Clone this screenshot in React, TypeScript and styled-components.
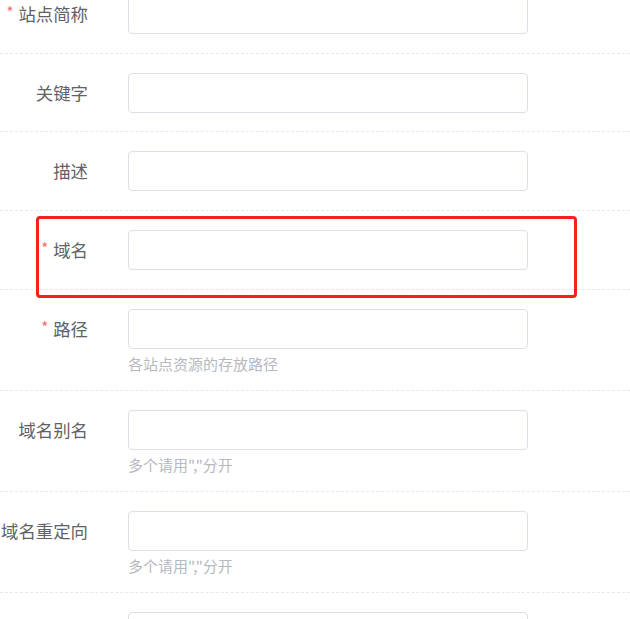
import React from "react";
import styled, { createGlobalStyle } from "styled-components";

type Field = {
  label: string;
  required?: boolean;
  hint?: string;
  marked?: boolean;
};

const fields: Field[] = [
  { label: "站点简称", required: true },
  { label: "关键字" },
  { label: "描述" },
  { label: "域名", required: true, marked: true },
  { label: "路径", required: true, hint: "各站点资源的存放路径" },
  { label: "域名别名", hint: '多个请用","分开' },
  { label: "域名重定向", hint: '多个请用","分开' },
  { label: "" },
];

const App = () => {
  return (
    <>
      <GlobalStyle />
      <Form>
        {fields.map((f, i) => (
          <Row key={i} hasHint={!!f.hint}>
            <Label>
              {f.required && <Star>*</Star>}
              {f.label}
            </Label>
            <Control>
              <Input type="text" />
              {f.hint && <Hint>{f.hint}</Hint>}
            </Control>
            {f.marked && <Highlight />}
          </Row>
        ))}
      </Form>
    </>
  );
};

export default App;

const GlobalStyle = createGlobalStyle`
  html, body {
    margin: 0;
    padding: 0;
    background: #fff;
    overflow: hidden;
  }
  body {
    font-family: "Noto Sans CJK SC", "Noto Sans", sans-serif;
  }
`;

const Form = styled.div`
  margin-top: -25px;
  width: 630px;
`;

const Row = styled.div<{ hasHint: boolean }>`
  position: relative;
  display: grid;
  grid-template-columns: 88px 400px;
  column-gap: 40px;
  align-items: start;
  padding: 19px 0 ${(p) => (p.hasHint ? "15px" : "18.7px")};
  border-bottom: 1px dashed #e6e8ec;
`;

const Label = styled.div`
  height: 40px;
  line-height: 40px;
  text-align: right;
  font-size: 17.4px;
  color: #5f6266;
  white-space: nowrap;
`;

const Star = styled.span`
  color: #f56c6c;
  font-size: 15px;
  margin-right: 5px;
  vertical-align: top;
  position: relative;
  top: -2px;
`;

const Control = styled.div`
  display: flex;
  flex-direction: column;
`;

const Input = styled.input`
  box-sizing: border-box;
  width: 400px;
  height: 40px;
  border: 1px solid #dcdfe6;
  border-radius: 4px;
  background: #fff;
  outline: none;
`;

const Hint = styled.div`
  padding-top: 4px;
  line-height: 22px;
  font-size: 15px;
  color: #b6b9bf;
`;

const Highlight = styled.div`
  position: absolute;
  top: 5px;
  left: 36px;
  width: 541px;
  height: 82px;
  box-sizing: border-box;
  border: 3px solid #f5221b;
  border-radius: 4px;
  pointer-events: none;
`;
